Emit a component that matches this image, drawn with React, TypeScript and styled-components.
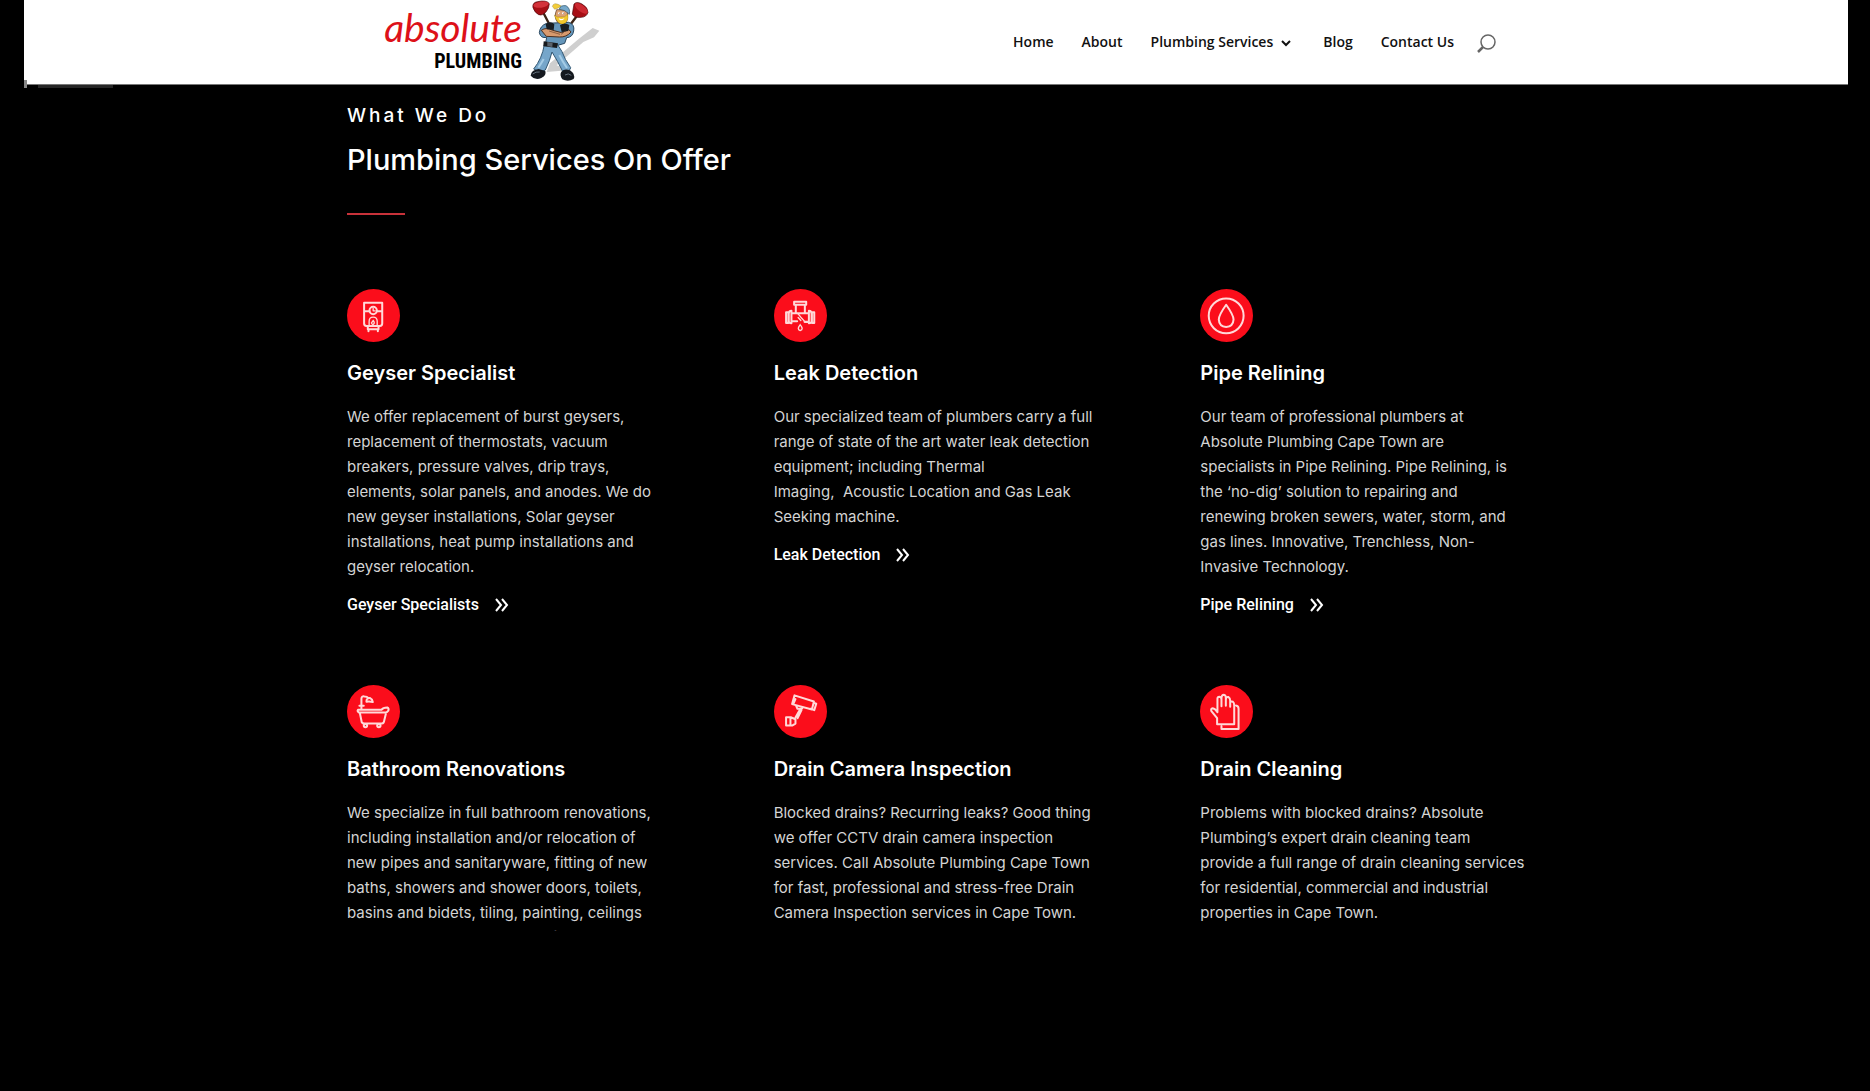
import React from "react";
import styled, { createGlobalStyle } from "styled-components";

const GlobalStyle = createGlobalStyle`
  *, *::before, *::after { box-sizing: border-box; }
  body { margin: 0; background: #000; color: #fff; font-family: Inter, sans-serif; }
  h1, h2, h3, p { margin: 0; }
`;

const Page = styled.div`
  margin: 0 22px 0 24px;
  background: #000;
`;

const Header = styled.header`
  position: relative;
  background: #fff;
  border-bottom: 1px solid #777;

  &::before {
    content: "";
    position: absolute;
    left: 14px;
    bottom: -4px;
    width: 75px;
    height: 3px;
    background: #262626;
  }

  &::after {
    content: "";
    position: absolute;
    left: 0;
    bottom: -4px;
    width: 3px;
    height: 8px;
    background: #888;
  }
`;

const HeaderInner = styled.div`
  max-width: 1120px;
  height: 84px;
  margin: 0 auto;
  padding-left: 8px;
  display: flex;
  align-items: center;
  justify-content: space-between;
`;

const LogoLink = styled.a`
  display: flex;
  gap: 8px;
  height: 84px;
  text-decoration: none;
`;

const LogoWords = styled.span`
  display: flex;
  flex-direction: column;
  align-items: flex-end;
  width: 138px;
`;

const LogoScript = styled.span`
  font: italic 400 39px/54px Lato, sans-serif;
  color: #dd1119;
`;

const LogoBlock = styled.span`
  font: 700 20px/14px "Roboto Condensed", "Liberation Sans Narrow", "Liberation Sans", sans-serif;
  color: #000;
`;

const Nav = styled.nav`
  display: flex;
  align-items: center;
  gap: 28px;
`;

const NavLink = styled.a`
  display: flex;
  align-items: center;
  gap: 8px;
  font: 600 14px/20px "Open Sans", sans-serif;
  color: #111;
  text-decoration: none;
`;

const SearchButton = styled.button`
  display: flex;
  padding: 3px 0 0;
  margin-left: -5px;
  border: 0;
  background: none;
`;

const Services = styled.main`
  height: 846px;
  overflow: hidden;
`;

const Container = styled.div`
  max-width: 1178px;
  margin: 0 auto;
  padding-top: 17px;
`;

const Eyebrow = styled.h2`
  font-size: 19px;
  line-height: 28px;
  font-weight: 500;
  letter-spacing: 3px;
`;

const Heading = styled.h1`
  margin-top: 12px;
  font-size: 29px;
  line-height: 36px;
  font-weight: 500;
`;

const Rule = styled.div`
  width: 58px;
  height: 2px;
  margin: 35px 0 74px;
  background: #c8323a;
`;

const Grid = styled.div`
  display: grid;
  grid-template-columns: repeat(3, 1fr);
  column-gap: 102px;
  row-gap: 70px;
`;

const Card = styled.article`
  display: flex;
  flex-direction: column;
  align-items: flex-start;
`;

const Badge = styled.svg`
  width: 53px;
  height: 53px;
  fill: none;
  stroke: #ffd9d9;
  stroke-width: 6;
  stroke-linejoin: round;
  stroke-linecap: round;
`;

const CardTitle = styled.h3`
  margin-top: 17px;
  font-size: 20px;
  line-height: 28px;
  font-weight: 600;
`;

const CardText = styled.p`
  margin-top: 17px;
  font-size: 15px;
  line-height: 25px;
  font-weight: 400;
  color: #d4d4d4;
  white-space: pre;
`;

const MoreLink = styled.a`
  display: flex;
  align-items: center;
  gap: 16px;
  margin-top: 16px;
  font: 500 16px/20px Roboto, sans-serif;
  color: #fff;
  text-decoration: none;
`;

const Mascot = () => (
  <svg width="73" height="84" viewBox="480 0 219 252" aria-hidden="true">
    <path d="M540 190 L625 118 L668 84 L688 92 L672 112 L640 126 L560 196 L600 210 L530 216Z" fill="#cfcfcf" />
    <path d="M520 38 L545 86 M625 42 L598 78" stroke="#3c2415" strokeWidth="7" />
    <path d="M489 23 Q486 8 502 5 Q530 -1 538 11 Q538 24 528 36 Q516 49 506 44 Q494 38 489 23Z" fill="#a70f15" stroke="#4d080b" strokeWidth="2" />
    <ellipse cx="513" cy="14" rx="23" ry="9" fill="#d3323a" transform="rotate(-8 513 14)" />
    <path d="M612 12 Q620 3 636 12 Q654 22 654 37 Q650 51 634 52 Q612 54 607 42Z" fill="#a70f15" stroke="#4d080b" strokeWidth="2" />
    <ellipse cx="634" cy="25" rx="23" ry="10" fill="#cc2931" transform="rotate(37 634 25)" />
    <path d="M530 70 Q510 77 508 98 Q512 116 530 112 L526 134 L560 137 L584 130 L590 113 Q608 112 611 93 Q615 73 596 67Z" fill="#6596ba" stroke="#28475f" strokeWidth="3" />
    <path d="M547 19 Q551 7 564 13 L574 18 Q564 26 554 28Z" fill="#f2cd3a" stroke="#806816" />
    <path d="M560 29 Q551 49 561 65 Q576 79 591 62 L594 30Z" fill="#dba174" stroke="#55351f" strokeWidth="2" />
    <path d="M568 28 Q570 15 588 17 Q602 25 598 43 Q584 28 568 28Z" fill="#76a9cb" stroke="#264b63" strokeWidth="2" />
    <path d="M553 45 L563 51 L584 50 L593 42 Q598 65 580 73 Q561 73 553 45Z" fill="#f1c82d" stroke="#8b6910" />
    <path d="M566 54 Q575 61 584 53 Q579 64 569 60Z" fill="#fff" />
    <circle cx="567" cy="40" r="3" fill="#fff" /><circle cx="579" cy="40" r="3" fill="#fff" />
    <circle cx="568" cy="41" r="1" fill="#111" /><circle cx="580" cy="41" r="1" fill="#111" />
    <path d="M514 91 Q529 80 548 91 L575 98 L596 88 L603 96 Q590 112 568 111 L529 109Z" fill="#d89a6e" stroke="#4c2e1d" strokeWidth="3" />
    <path d="M527 72 Q542 61 553 73 L551 90 L530 88Z M570 76 Q584 65 598 75 L595 93 L575 96Z" fill="#181d22" />
    <path d="M537 93 L570 103 M586 92 L574 103" stroke="#68432a" strokeWidth="2" />
    <path d="M523 134 L563 134 L576 155 Q584 178 602 203 Q600 216 579 216 Q563 183 546 156 Q540 181 526 210 Q510 219 491 207 Q516 176 523 134Z" fill="#76a6ca" stroke="#315773" strokeWidth="3" />
    <path d="M521 124 L564 130 L561 144 L520 139Z" fill="#17191c" />
    <path d="M532 126 L548 128 L547 141 L532 139Z" fill="#59616a" />
    <path d="M521 177 Q512 193 505 203 M568 165 Q578 185 591 204" stroke="#a5cce6" strokeWidth="6" fill="none" />
    <path d="M482 227 Q484 209 506 207 L526 213 Q530 226 514 234 Q496 243 482 227Z" fill="#15191f" />
    <path d="M574 215 Q583 205 600 211 Q617 222 611 237 Q594 247 577 238 Q568 225 574 215Z" fill="#15191f" />
    <path d="M488 222 Q498 214 509 216 M585 225 Q595 218 604 226" stroke="#66727e" strokeWidth="3" fill="none" />
  </svg>
);

const Chevron = () => (
  <svg width="14" height="20" viewBox="0 0 14 20" fill="none" stroke="#111" strokeWidth="2" aria-hidden="true">
    <path d="M1 9 L5 13 L9 9" />
  </svg>
);

const DoubleChevron = () => (
  <svg width="14" height="14" viewBox="0 0 14 14" fill="none" stroke="#fff" strokeWidth="2" aria-hidden="true">
    <path d="M1 1 L6 7 L1 13 M7 1 L12 7 L7 13" />
  </svg>
);

const icons: Record<string, React.ReactNode> = {
  geyser: (
    <>
      <path d="M51 41 H105 V103 Q105 110 98 110 H58 Q51 110 51 103Z M51 66 H67 M89 66 H105 M62 111 V120 H94 V111 M64 126 V122 M92 126 V122" />
      <circle cx="78" cy="64" r="11" />
      <path d="M78 58 V65 H84 M66 109 V96 Q66 84 78 84 Q90 84 90 96 V109 M78 94 L73 101 Q75 107 79 105 Q84 101 78 94" strokeWidth="4" />
    </>
  ),
  leak: (
    <>
      <path d="M60 38 H96 V47 H60Z M65 49 V69 M92 49 V69 M52 72 H104 M52 96 H69 M91 98 H104 M36 69 H43 V101 H36Z M52 65 Q44 65 44 74 V96 Q44 102 52 102Z M104 65 Q112 65 112 74 V96 Q112 102 104 102Z M113 69 H120 V101 H113Z" />
      <path d="M71 73 L80 84 L90 95 M72 85 L80 94 M78 106 Q67 121 78 124 Q90 121 78 106" strokeWidth="4" />
    </>
  ),
  drop: (
    <>
      <circle cx="78" cy="80" r="52" />
      <path d="M78 47 Q56 78 56 91 Q57 112 78 113 Q99 112 100 91 Q100 78 78 47Z" />
    </>
  ),
  bath: (
    <>
      <path d="M43 71 V41 Q43 33 52 34 Q60 34 64 39 M37 62 H50 M58 50 Q57 38 69 39 Q76 42 77 51 Q67 48 58 50Z" />
      <path d="M33 74 H103 Q107 67 120 67 Q126 70 123 77 Q120 82 113 82 H36 Q29 78 33 74Z M38 82 L44 111 Q46 115 52 115 H104 Q110 114 111 106 L117 81" />
      <circle cx="55" cy="121" r="5" /><circle cx="95" cy="121" r="5" />
    </>
  ),
  camera: (
    <>
      <path d="M61 31 L119 49 L113 73 L54 57Z M64 42 L59 53 M118 53 L126 56 L120 75 L109 71 M66 62 L70 71 H83 L86 66 M78 72 L64 97 M82 75 L70 99" />
      <path d="M36 96 H50 L64 102 V115 L54 121 H36Z M49 96 V121" />
    </>
  ),
  gloves: (
    <>
      <path d="M51 117 V99 L34 78 Q31 70 38 69 Q45 70 52 81 V41 Q52 35 58 35 Q64 36 64 44 M64 63 V38 Q65 29 71 29 Q77 30 77 38 V62 M77 43 Q79 34 85 36 Q90 39 90 47 V65 M90 54 Q91 47 98 50 Q102 53 102 61 V117 H51" />
      <path d="M107 61 Q115 62 115 71 V131 H64 V122" />
    </>
  ),
};

type Service = { icon: string; title: string; text: string; link?: string };

const services: Service[] = [
  {
    icon: "geyser",
    title: "Geyser Specialist",
    text: "We offer replacement of burst geysers,\nreplacement of thermostats, vacuum\nbreakers, pressure valves, drip trays,\nelements, solar panels, and anodes. We do\nnew geyser installations, Solar geyser\ninstallations, heat pump installations and\ngeyser relocation.",
    link: "Geyser Specialists",
  },
  {
    icon: "leak",
    title: "Leak Detection",
    text: "Our specialized team of plumbers carry a full\nrange of state of the art water leak detection\nequipment; including Thermal\nImaging,\u00a0 Acoustic Location and Gas Leak\nSeeking machine.",
    link: "Leak Detection",
  },
  {
    icon: "drop",
    title: "Pipe Relining",
    text: "Our team of professional plumbers at\nAbsolute Plumbing Cape Town are\nspecialists in Pipe Relining. Pipe Relining, is\nthe ‘no-dig’ solution to repairing and\nrenewing broken sewers, water, storm, and\ngas lines. Innovative, Trenchless, Non-\nInvasive Technology.",
    link: "Pipe Relining",
  },
  {
    icon: "bath",
    title: "Bathroom Renovations",
    text: "We specialize in full bathroom renovations,\nincluding installation and/or relocation of\nnew pipes and sanitaryware, fitting of new\nbaths, showers and shower doors, toilets,\nbasins and bidets, tiling, painting, ceilings\nand additions, carpentry, roofs, hand rails",
  },
  {
    icon: "camera",
    title: "Drain Camera Inspection",
    text: "Blocked drains? Recurring leaks? Good thing\nwe offer CCTV drain camera inspection\nservices. Call Absolute Plumbing Cape Town\nfor fast, professional and stress-free Drain\nCamera Inspection services in Cape Town.",
  },
  {
    icon: "gloves",
    title: "Drain Cleaning",
    text: "Problems with blocked drains? Absolute\nPlumbing’s expert drain cleaning team\nprovide a full range of drain cleaning services\nfor residential, commercial and industrial\nproperties in Cape Town.",
  },
];

export default function App() {
  return (
    <>
      <GlobalStyle />
      <Page>
        <Header>
          <HeaderInner>
            <LogoLink href="#">
              <LogoWords>
                <LogoScript>absolute</LogoScript>
                <LogoBlock>PLUMBING</LogoBlock>
              </LogoWords>
              <Mascot />
            </LogoLink>
            <Nav>
              <NavLink href="#">Home</NavLink>
              <NavLink href="#">About</NavLink>
              <NavLink href="#">Plumbing Services <Chevron /></NavLink>
              <NavLink href="#">Blog</NavLink>
              <NavLink href="#">Contact Us</NavLink>
              <SearchButton type="button" aria-label="Search">
                <svg width="19" height="20" viewBox="0 0 19 20" fill="none" stroke="#666" strokeWidth="1.5">
                  <circle cx="11" cy="8" r="7" />
                  <path d="M6 13 L1 18" strokeWidth="2.5" />
                </svg>
              </SearchButton>
            </Nav>
          </HeaderInner>
        </Header>
        <Services>
          <Container>
            <Eyebrow>What We Do</Eyebrow>
            <Heading>Plumbing Services On Offer</Heading>
            <Rule />
            <Grid>
              {services.map((s) => (
                <Card key={s.title}>
                  <Badge viewBox="0 0 158 158" aria-hidden="true">
                    <circle cx="79" cy="79" r="79" fill="#fb0d1b" stroke="none" />
                    {icons[s.icon]}
                  </Badge>
                  <CardTitle>{s.title}</CardTitle>
                  <CardText>{s.text}</CardText>
                  {s.link && (
                    <MoreLink href="#">
                      {s.link}
                      <DoubleChevron />
                    </MoreLink>
                  )}
                </Card>
              ))}
            </Grid>
          </Container>
        </Services>
      </Page>
    </>
  );
}
